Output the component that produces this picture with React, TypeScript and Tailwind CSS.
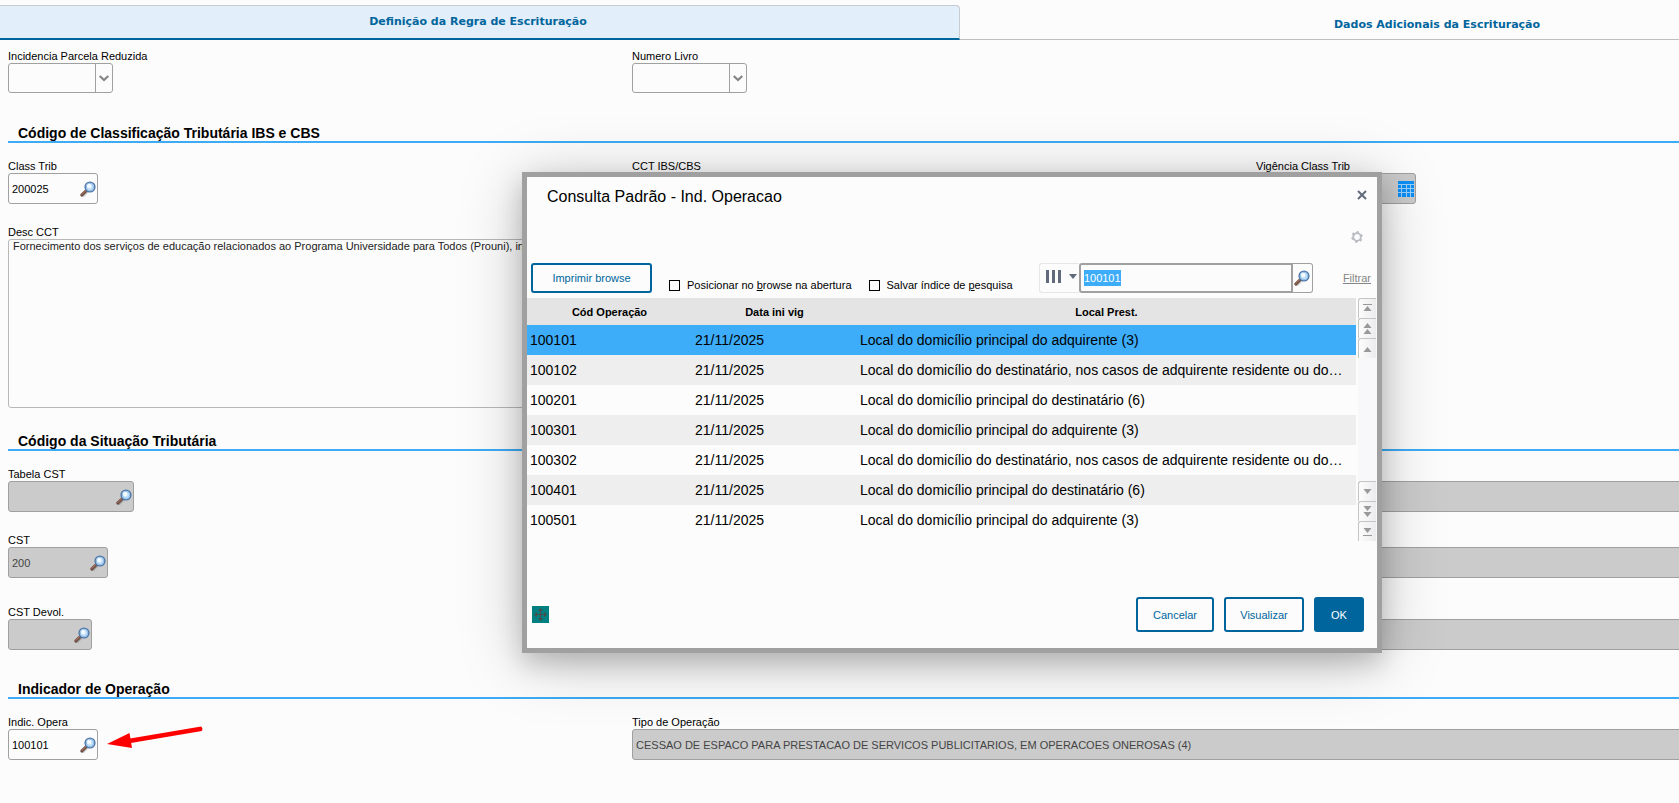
import { useEffect, useRef } from "react";
import type { ReactNode } from "react";

const operations = [
  { code: "100101", date: "21/11/2025", place: "Local do domicílio principal do adquirente (3)" },
  {
    code: "100102",
    date: "21/11/2025",
    place: "Local do domicílio do destinatário, nos casos de adquirente residente ou do…",
  },
  { code: "100201", date: "21/11/2025", place: "Local do domicílio principal do destinatário (6)" },
  { code: "100301", date: "21/11/2025", place: "Local do domicílio principal do adquirente (3)" },
  {
    code: "100302",
    date: "21/11/2025",
    place: "Local do domicílio do destinatário, nos casos de adquirente residente ou do…",
  },
  { code: "100401", date: "21/11/2025", place: "Local do domicílio principal do destinatário (6)" },
  { code: "100501", date: "21/11/2025", place: "Local do domicílio principal do adquirente (3)" },
];

function Magnifier() {
  return (
    <svg width="16" height="16" viewBox="0 0 16 16" className="shrink-0" aria-hidden="true">
      <path d="M2.6 14.4 7.4 9.6" stroke="#00000033" strokeWidth="4" strokeLinecap="round" />
      <path d="M1.9 13.9 6.2 9.7" stroke="#6b4a40" strokeWidth="3" strokeLinecap="round" />
      <path d="M1.8 13.4 5.6 9.7" stroke="#a0705c" strokeWidth="1.2" strokeLinecap="round" />
      <circle cx="10" cy="6" r="4.9" fill="#c3e2fa" stroke="#4f78a8" strokeWidth="1.4" />
      <circle cx="10" cy="6" r="3.7" fill="none" stroke="#93bde6" strokeWidth="1" />
      <circle cx="9.2" cy="5" r="2.2" fill="#f3faff" />
    </svg>
  );
}

function CalendarIcon() {
  return (
    <svg width="16" height="16" viewBox="0 0 16 16" className="shrink-0" aria-hidden="true">
      <rect width="16" height="16" fill="#0c8ff5" />
      <path
        d="M0 3.5H16M0 7.5H16M0 11.5H16M3.5 3.5V16M8.5 3.5V16M12.5 3.5V16"
        stroke="#9dd0fa"
        strokeWidth="1"
      />
    </svg>
  );
}

function Field({ id, label, className = "", children }: {
  id: string;
  label: string;
  className?: string;
  children: ReactNode;
}) {
  return (
    <div className={`flex flex-col items-start ${className}`}>
      <label htmlFor={id} className="text-[11px] leading-[13px] whitespace-nowrap">
        {label}
      </label>
      {children}
    </div>
  );
}

function SelectBox({ id, width }: { id: string; width: string }) {
  return (
    <div className={`flex h-[30px] rounded-[3px] border border-[#a0a0a0] relative ${width}`}>
      <select id={id} className="w-full appearance-none bg-transparent pl-1 pr-5 text-[11px] outline-none">
        <option value=""></option>
      </select>
      <span className="pointer-events-none absolute inset-y-0 right-0 flex w-[17px] items-center justify-center border-l border-[#a0a0a0]">
        <svg width="10" height="7" viewBox="0 0 10 7" aria-hidden="true">
          <path d="M.7 1 5 5 9.3 1" fill="none" stroke="#858585" strokeWidth="2.2" />
        </svg>
      </span>
    </div>
  );
}

function LookupBox({ id, width, value = "", disabled = false, icon = <Magnifier />, name }: {
  id: string;
  width: string;
  value?: string;
  disabled?: boolean;
  icon?: ReactNode;
  name: string;
}) {
  return (
    <div
      className={`flex h-[31px] items-center rounded-[3px] border border-[#a0a0a0] pr-px ${width} ${
        disabled ? "bg-[#cbcbcb]" : "bg-[#fcfcfc]"
      }`}
    >
      <input
        id={id}
        defaultValue={value}
        disabled={disabled}
        className="h-full w-full min-w-0 pl-[3px] text-[11px] outline-none disabled:text-[#444]"
      />
      <button type="button" aria-label={name} className="shrink-0">
        {icon}
      </button>
    </div>
  );
}

function ReadOnly({ id, label, value = "", labelText }: {
  id: string;
  label: string;
  value?: string;
  labelText?: boolean;
}) {
  return (
    <div className="col-span-2 flex flex-col">
      {labelText ? (
        <label htmlFor={id} className="text-[11px] leading-[13px]">{label}</label>
      ) : (
        <div className="h-[13px]" />
      )}
      <input
        id={id}
        aria-label={label}
        defaultValue={value}
        disabled
        className="h-[31px] w-full rounded-[3px] border border-[#a0a0a0] bg-[#cbcbcb] px-[3px] text-[11px] text-[#444]"
      />
    </div>
  );
}

function SectionTitle({ children }: { children: ReactNode }) {
  return (
    <h2 className="mb-[17px] border-b-2 border-[#3dabf5] pl-[10px] text-[14px] leading-[16px] font-bold">
      {children}
    </h2>
  );
}

function ScrollButton({ name, children }: { name: string; children: ReactNode }) {
  return (
    <button
      type="button"
      aria-label={name}
      className="flex h-5 w-[18px] items-center justify-center rounded-tl-[3px] border-t border-l border-[#c4c4c4] bg-linear-to-r from-[#fcfcfc] to-[#ececee]"
    >
      <svg width="9" height="13" viewBox="0 0 9 13" fill="#999" aria-hidden="true">
        {children}
      </svg>
    </button>
  );
}

function LookupDialog() {
  const searchRef = useRef<HTMLInputElement>(null);

  useEffect(() => {
    searchRef.current?.focus();
    searchRef.current?.select();
  }, []);

  return (
    <div
      role="dialog"
      aria-labelledby="dialog-title"
      className="absolute top-[172px] left-[522px] w-[860px] border-5 border-[#a0a0a0] bg-[#fcfcfc] shadow-[0_8px_60px_rgba(0,0,0,0.22),0_10px_24px_rgba(0,0,0,0.18)]"
    >
      <div className="flex items-start justify-between pt-[10px] pr-[10px] pl-5">
        <h1 id="dialog-title" className="text-[16px] leading-5">Consulta Padrão - Ind. Operacao</h1>
        <button type="button" aria-label="Fechar" className="pt-[3px]">
          <svg width="10" height="10" viewBox="0 0 10 10" aria-hidden="true">
            <path d="M1 1 9 9M9 1 1 9" stroke="#606a7b" strokeWidth="2" />
          </svg>
        </button>
      </div>
      <div className="flex justify-end pt-6 pr-[14px]">
        <button type="button" aria-label="Configurar">
          <svg width="12" height="12" viewBox="0 0 12 12" fill="none" stroke="#b9bcc1" aria-hidden="true">
            <circle cx="6" cy="6" r="3.8" strokeWidth="1.8" />
            <path
              d="M6.9.3 6.5 2.2M11.4 4.1 9.6 4.9M10.5 9.8 9 8.6M5.1 11.7 5.5 9.8M.6 7.9 2.4 7.1M1.5 2.2 3 3.4"
              strokeWidth="2.4"
            />
          </svg>
        </button>
      </div>

      <div className="mt-5 flex h-[30px] items-center pr-[6px] pl-1 text-[11px]">
        <button
          type="button"
          className="h-[30px] w-[121px] rounded-[3px] border-2 border-[#00659c] text-[#00659c]"
        >
          Imprimir browse
        </button>
        <label className="ml-[17px] flex items-center gap-[7px] pt-[14px]">
          <input type="checkbox" className="size-[11px] appearance-none border border-black" />
          <span>Posicionar no <u>b</u>rowse na abertura</span>
        </label>
        <label className="ml-[17px] flex items-center gap-[7px] pt-[14px]">
          <input type="checkbox" className="size-[11px] appearance-none border border-black" />
          <span>Salvar índice de <u>p</u>esquisa</span>
        </label>
        <div className="ml-auto flex h-[30px]">
          <button
            type="button"
            aria-label="Colunas"
            className="flex w-10 items-center justify-end gap-2 rounded-l-[3px] border border-r-0 border-[#e6e6e6] pr-[2px] pb-[3px]"
          >
            <svg width="15" height="13" viewBox="0 0 15 13" fill="#606a7b" aria-hidden="true">
              <path d="M0 0H3V13H0ZM6 0H9V13H6ZM12 0H15V13H12Z" />
            </svg>
            <svg width="8" height="5" viewBox="0 0 8 5" fill="#606a7b" aria-hidden="true">
              <path d="M0 0H8L4 5Z" />
            </svg>
          </button>
          <input
            ref={searchRef}
            aria-label="Pesquisar"
            defaultValue="100101"
            className="w-[214px] rounded-l-[3px] border-2 border-[#a0a0a0] pl-[3px] text-[11px] outline-none selection:bg-[#3dacf9] selection:text-white"
          />
          <button
            type="button"
            aria-label="Buscar"
            className="flex w-[20px] items-center justify-center rounded-r-[3px] border border-l-0 border-[#a0a0a0]"
          >
            <Magnifier />
          </button>
        </div>
        <a href="#filtrar" className="ml-[30px] text-[#868686] underline">Filtrar</a>
      </div>

      <div className="mt-[5px] flex h-[243px] justify-between">
        <table className="h-[237px] w-[829px] table-fixed border-collapse self-start text-left">
          <colgroup>
            <col className="w-[165px]" />
            <col className="w-[165px]" />
            <col />
          </colgroup>
          <thead>
            <tr className="h-[27px] bg-[#e4e4e4] text-center text-[11px]">
              <th className="p-0 pt-[2px]">Cód Operação</th>
              <th className="p-0 pt-[2px]">Data ini vig</th>
              <th className="p-0 pt-[2px]">Local Prest.</th>
            </tr>
          </thead>
          <tbody className="text-[14px]">
            {operations.map((op, i) => (
              <tr
                key={op.code}
                className={`h-[30px] ${i === 0 ? "bg-[#3dacf9]" : i % 2 === 1 ? "bg-[#eeeeee]" : ""}`}
              >
                <td className="py-0 pl-[3px]">{op.code}</td>
                <td className="py-0 pl-[3px]">{op.date}</td>
                <td className="truncate py-0 pl-[3px]">{op.place}</td>
              </tr>
            ))}
          </tbody>
        </table>
        <div className="flex flex-col justify-between bg-[#f8f8fa] pr-px">
          <div>
            <ScrollButton name="Primeiro">
              <path d="M0 2H9V3H0ZM4.5 4 8.5 9H.5Z" />
            </ScrollButton>
            <ScrollButton name="Página anterior">
              <path d="M4.5 1 8.5 6H.5ZM4.5 7 8.5 12H.5Z" />
            </ScrollButton>
            <ScrollButton name="Anterior">
              <path d="M4.5 5 8.5 10H.5Z" />
            </ScrollButton>
          </div>
          <div>
            <ScrollButton name="Próximo">
              <path d="M4.5 9 8.5 4H.5Z" />
            </ScrollButton>
            <ScrollButton name="Próxima página">
              <path d="M4.5 6 8.5 1H.5ZM4.5 12 8.5 7H.5Z" />
            </ScrollButton>
            <ScrollButton name="Último">
              <path d="M4.5 8 8.5 3H.5ZM0 10H9V11H0Z" />
            </ScrollButton>
          </div>
        </div>
      </div>

      <div className="mt-14 flex items-center pr-[13px] pb-4 pl-[5px] text-[11px]">
        <button type="button" aria-label="Mover" className="mr-auto bg-[#008080]">
          <svg width="17" height="17" viewBox="0 0 17 17" aria-hidden="true">
            <path d="M8.5 4V13M4 8.5H13" stroke="#4c4c4c" strokeWidth="1.2" />
            <path
              d="M8.5 2 11 5H6ZM8.5 15 11 12H6ZM2 8.5 5 6V11ZM15 8.5 12 6V11Z"
              fill="#4c4c4c"
            />
          </svg>
        </button>
        <div className="flex gap-[10px]">
          <button type="button" className="h-[35px] w-[78px] rounded-[3px] border-2 border-[#00659c] pt-px text-[#00659c]">
            Cancelar
          </button>
          <button type="button" className="h-[35px] w-20 rounded-[3px] border-2 border-[#00659c] pt-px text-[#00659c]">
            Visualizar
          </button>
          <button type="button" className="h-[35px] w-[50px] rounded-[3px] bg-[#00659c] pt-px text-white">
            OK
          </button>
        </div>
      </div>
    </div>
  );
}

export default function App() {
  return (
    <div className="relative min-h-screen overflow-hidden bg-[#fcfcfc] font-['Liberation_Sans',Arial,sans-serif] text-black">
      {/* the form is wider than the window and runs off its right edge */}
      <div className="w-[114%]">
        <div className="flex pt-[5px] font-['DejaVu_Sans',Verdana,sans-serif] text-[11px] font-bold text-[#00659c]">
          <button
            type="button"
            className="-ml-1 h-[35px] w-[964px] rounded-tr-[4px] border border-b-2 border-[#c8ccd0] border-b-[#00659c] bg-[#e2eefa]"
          >
            Definição da Regra de Escrituração
          </button>
          <button type="button" className="h-[35px] flex-1 border-b border-[#c0c0c0] pt-[6px]">
            Dados Adicionais da Escrituração
          </button>
        </div>

        <form className="pt-[10px] pr-[34px] pl-2">
          <div className="mb-8 grid grid-cols-3">
            <Field id="incidencia" label="Incidencia Parcela Reduzida">
              <SelectBox id="incidencia" width="w-[105px]" />
            </Field>
            <Field id="livro" label="Numero Livro">
              <SelectBox id="livro" width="w-[115px]" />
            </Field>
          </div>

          <SectionTitle>Código de Classificação Tributária IBS e CBS</SectionTitle>
          <div className="mb-[22px] grid grid-cols-3">
            <Field id="class-trib" label="Class Trib">
              <LookupBox id="class-trib" name="Pesquisar Class Trib" width="w-[90px]" value="200025" />
            </Field>
            <Field id="cct" label="CCT IBS/CBS">
              <LookupBox id="cct" name="Pesquisar CCT" width="w-[90px]" disabled />
            </Field>
            <Field id="vigencia" label="Vigência Class Trib">
              <LookupBox id="vigencia" name="Calendário" width="w-[160px]" disabled icon={<CalendarIcon />} />
            </Field>
          </div>
          <Field id="desc-cct" label="Desc CCT" className="mb-[25px]">
            <textarea
              id="desc-cct"
              readOnly
              className="h-[169px] w-1/2 resize-none overflow-hidden rounded-[3px] border border-[#b8b8b8] px-1 text-[11px] leading-[13px] text-[#222] outline-none"
              defaultValue="Fornecimento dos serviços de educação relacionados ao Programa Universidade para Todos (Prouni), instituído pela Lei nº 11.096"
            />
          </Field>

          <SectionTitle>Código da Situação Tributária</SectionTitle>
          <div className="mb-[22px] grid grid-cols-3">
            <Field id="tabela-cst" label="Tabela CST">
              <LookupBox id="tabela-cst" name="Pesquisar Tabela CST" width="w-[126px]" disabled />
            </Field>
            <ReadOnly id="desc-tabela" label="Descrição da tabela" />
          </div>
          <div className="mb-7 grid grid-cols-3">
            <Field id="cst" label="CST">
              <LookupBox id="cst" name="Pesquisar CST" width="w-[100px]" value="200" disabled />
            </Field>
            <ReadOnly id="desc-cst" label="Descrição do CST" />
          </div>
          <div className="mb-[31px] grid grid-cols-3">
            <Field id="cst-devol" label="CST Devol.">
              <LookupBox id="cst-devol" name="Pesquisar CST Devol." width="w-[84px]" disabled />
            </Field>
            <ReadOnly id="desc-devol" label="Descrição do CST Devol." />
          </div>

          <SectionTitle>Indicador de Operação</SectionTitle>
          <div className="grid grid-cols-3">
            <div className="flex items-end gap-2">
              <Field id="indic" label="Indic. Opera">
                <LookupBox id="indic" name="Pesquisar Indic. Opera" width="w-[90px]" value="100101" />
              </Field>
              <svg width="98" height="26" viewBox="0 0 98 26" className="mb-2" aria-hidden="true">
                <path d="M94 3 23 15" stroke="#ff0000" strokeWidth="4.8" strokeLinecap="round" />
                <path d="M1 18 23.500 7 26 22Z" fill="#ff0000" />
              </svg>
            </div>
            <ReadOnly
              id="tipo"
              label="Tipo de Operação"
              labelText
              value="CESSAO DE ESPACO PARA PRESTACAO DE SERVICOS PUBLICITARIOS, EM OPERACOES ONEROSAS (4)"
            />
          </div>
        </form>
      </div>

      <LookupDialog />
    </div>
  );
}
